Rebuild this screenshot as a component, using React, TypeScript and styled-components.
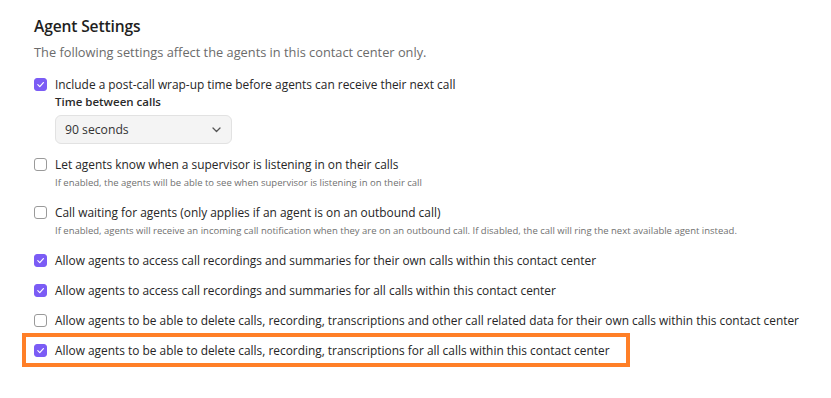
import React from 'react';
import styled, { createGlobalStyle } from 'styled-components';

const GlobalStyle = createGlobalStyle`
  html, body {
    margin: 0;
    padding: 0;
    background: #ffffff;
  }
  body {
    font-family: "Open Sans", "Noto Sans", "Liberation Sans", sans-serif;
    color: #252525;
  }
`;

const Page = styled.div`
  padding: 15px 0 0 34px;
`;

const Title = styled.h2`
  margin: 0;
  font-size: 15.6px;
  letter-spacing: -0.15px;
  line-height: 22px;
  font-weight: 600;
  color: #1f1f1f;
`;

const Description = styled.p`
  margin: 6px 0 0;
  font-size: 12.8px;
  line-height: 18px;
  color: #6b6b6b;
`;

const List = styled.div`
  display: flex;
  flex-direction: column;
  margin-top: 14px;
`;

const Option = styled.div<{ $gap: number }>`
  margin-top: ${(p) => p.$gap}px;
`;

const Row = styled.label`
  display: flex;
  align-items: center;
  gap: 8px;
  font-size: 11.9px;
  line-height: 18px;
  color: #262626;
`;

const Box = styled.span<{ $checked: boolean }>`
  width: 13px;
  height: 13px;
  flex: none;
  box-sizing: border-box;
  border-radius: 3px;
  display: inline-flex;
  align-items: center;
  justify-content: center;
  background: ${(p) => (p.$checked ? '#7b5cf5' : '#ffffff')};
  border: 1px solid ${(p) => (p.$checked ? '#7b5cf5' : '#9a9a9a')};
`;

const Indented = styled.div`
  padding-left: 21px;
`;

const Hint = styled.div`
  margin-top: 3px;
  font-size: 9.5px;
  line-height: 14px;
  color: #707070;
`;

const FieldLabel = styled.div`
  font-size: 11.5px;
  line-height: 18px;
  font-weight: 600;
  color: #2a2a2a;
`;

const Select = styled.div`
  margin-top: 4px;
  width: 177px;
  height: 29px;
  box-sizing: border-box;
  display: flex;
  align-items: center;
  justify-content: space-between;
  padding: 0 10px 0 9px;
  background: #f4f4f4;
  border: 1px solid #e2e2e2;
  border-radius: 6px;
  font-size: 12.2px;
  color: #333;
`;

const Highlight = styled.div`
  align-self: flex-start;
  margin: 4px 0 0 -12px;
  padding: 4px 16px 4px 8px;
  border: 4px solid #ff7f27;
`;

const Check = () => (
  <svg width="9" height="9" viewBox="0 0 10 10" fill="none">
    <path d="M2 5.2 L4.2 7.3 L8.2 2.8" stroke="#fff" strokeWidth="1.3" strokeLinecap="round" strokeLinejoin="round" />
  </svg>
);

const Chevron = () => (
  <svg width="9" height="6" viewBox="0 0 9 6" fill="none">
    <path d="M1 1 L4.5 4.5 L8 1" stroke="#555" strokeWidth="1.3" strokeLinecap="round" strokeLinejoin="round" />
  </svg>
);

const CheckRow = ({ checked, children }: { checked: boolean; children: React.ReactNode }) => (
  <Row>
    <Box $checked={checked}>{checked && <Check />}</Box>
    <span>{children}</span>
  </Row>
);

const App = () => {
  return (
    <>
      <GlobalStyle />
      <Page>
        <Title>Agent Settings</Title>
        <Description>The following settings affect the agents in this contact center only.</Description>
        <List>
          <Option $gap={0}>
            <CheckRow checked>Include a post-call wrap-up time before agents can receive their next call</CheckRow>
            <Indented>
              <FieldLabel>Time between calls</FieldLabel>
              <Select>
                <span>90 seconds</span>
                <Chevron />
              </Select>
            </Indented>
          </Option>
          <Option $gap={11}>
            <CheckRow checked={false}>Let agents know when a supervisor is listening in on their calls</CheckRow>
            <Indented>
              <Hint>If enabled, the agents will be able to see when supervisor is listening in on their call</Hint>
            </Indented>
          </Option>
          <Option $gap={13}>
            <CheckRow checked={false}>Call waiting for agents (only applies if an agent is on an outbound call)</CheckRow>
            <Indented>
              <Hint>
                If enabled, agents will receive an incoming call notification when they are on an outbound call. If disabled, the call will ring the next available agent instead.
              </Hint>
            </Indented>
          </Option>
          <Option $gap={13}>
            <CheckRow checked>Allow agents to access call recordings and summaries for their own calls within this contact center</CheckRow>
          </Option>
          <Option $gap={12}>
            <CheckRow checked>Allow agents to access call recordings and summaries for all calls within this contact center</CheckRow>
          </Option>
          <Option $gap={12}>
            <CheckRow checked={false}>
              Allow agents to be able to delete calls, recording, transcriptions and other call related data for their own calls within this contact center
            </CheckRow>
          </Option>
          <Highlight>
            <CheckRow checked>Allow agents to be able to delete calls, recording, transcriptions for all calls within this contact center</CheckRow>
          </Highlight>
        </List>
      </Page>
    </>
  );
};

export default App;
